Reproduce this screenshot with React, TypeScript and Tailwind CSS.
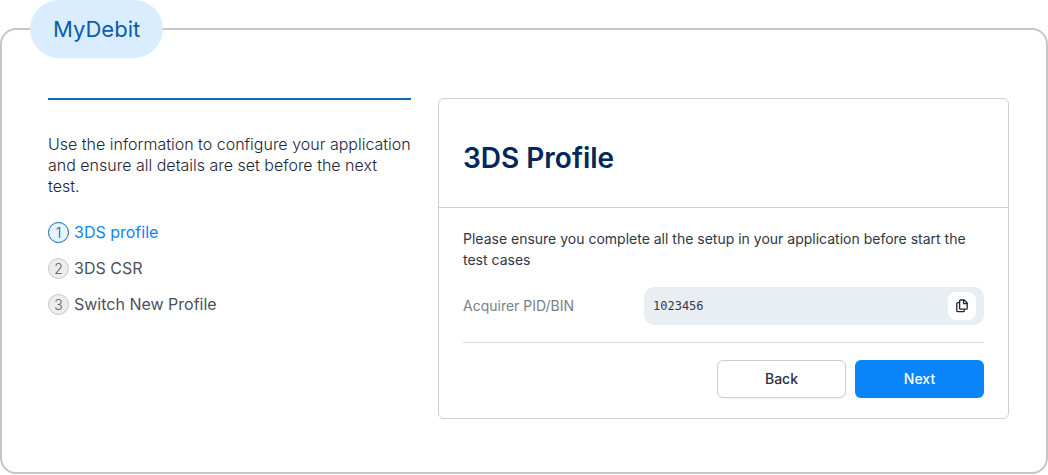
import React, { useState } from 'react';

interface Step {
    id: number;
    label: string;
}

const STEPS: Step[] = [
    { id: 1, label: '3DS profile' },
    { id: 2, label: '3DS CSR' },
    { id: 3, label: 'Switch New Profile' },
];

const CopyIcon: React.FC<{ className?: string }> = ({ className }) => (
    <svg viewBox="0 0 12 14" fill="none" stroke="currentColor" strokeWidth="1.3" strokeLinejoin="round" className={className} aria-hidden="true">
        <path d="M4.6 1h3.6l3 3v5.2a1 1 0 0 1-1 1H4.6a1 1 0 0 1-1-1V2a1 1 0 0 1 1-1Z" />
        <path d="M7.6 1v3.6h3.6" />
        <path d="M3.4 3.6H1.7a.9.9 0 0 0-.9.9v7.2a1 1 0 0 0 1 1h5.6a.9.9 0 0 0 .9-.9v-1.4" />
    </svg>
);

const StepList: React.FC<{ current: number; onSelect: (id: number) => void }> = ({ current, onSelect }) => (
    <ol className="mt-[25px] space-y-[15px]">
        {STEPS.map(step => {
            const active = step.id === current;
            return (
                <li key={step.id}>
                    <button
                        type="button"
                        onClick={() => onSelect(step.id)}
                        aria-current={active ? 'step' : undefined}
                        className="flex items-center gap-[5px] text-left"
                    >
                        <span
                            className={`flex h-[21px] w-[21px] items-center justify-center rounded-full border text-sm leading-none font-light ${active ? 'border-[#1463a8] bg-[#e9f3fd] text-[#0b5cab]' : 'border-[#c4c6c6] bg-[#eceeee] text-[#555a63]'}`}
                        >
                            {step.id}
                        </span>
                        <span className={`text-base leading-[21px] ${active ? 'text-[#0a84f8]' : 'text-[#4c515b]'}`}>
                            {step.label}
                        </span>
                    </button>
                </li>
            );
        })}
    </ol>
);

const ProfileCard: React.FC<{ onBack: () => void; onNext: () => void }> = ({ onBack, onNext }) => {
    const pid = '1023456';

    return (
        <section className="rounded-md border border-[#cfcfcf]">
            <header className="border-b border-[#cfcfcf] px-6 pt-[41px] pb-[31px]">
                <h1 className="text-[28px] leading-9 font-semibold text-[#00285a]">3DS Profile</h1>
            </header>

            <div className="px-6 pt-5 pb-5">
                <p className="pr-4 text-sm leading-[21px] text-[#2f3745]">
                    Please ensure you complete all the setup in your application before start the test cases
                </p>

                <div className="mt-[17px] flex items-center border-b border-[#d9dbdb] pb-[17px]">
                    <label htmlFor="pid" className="w-[181px] shrink-0 text-sm text-[#7b8189]">
                        Acquirer PID/BIN
                    </label>
                    <div className="flex h-[38px] min-w-0 flex-1 items-center rounded-[10px] bg-[#e9eef3] pr-2 pl-[9px]">
                        <input
                            id="pid"
                            type="text"
                            readOnly
                            value={pid}
                            className="min-w-0 flex-1 bg-transparent font-['DejaVu_Sans_Mono',monospace] text-xs text-[#343b47] outline-none"
                        />
                        <button
                            type="button"
                            aria-label="Copy"
                            onClick={() => navigator.clipboard?.writeText(pid)}
                            className="flex h-7 w-7 items-center justify-center rounded-lg bg-white text-[#1d2430]"
                        >
                            <CopyIcon className="h-[14px] w-3" />
                        </button>
                    </div>
                </div>

                <div className="mt-[17px] flex justify-end gap-[9px]">
                    <button type="button" onClick={onBack} className="h-[38px] w-[129px] rounded-md border border-[#cbcdcd] bg-white text-sm font-medium text-[#27303f] shadow-xs">
                        Back
                    </button>
                    <button type="button" onClick={onNext} className="h-[38px] w-[129px] rounded-md bg-[#0a85f9] text-sm font-medium text-white shadow-xs">
                        Next
                    </button>
                </div>
            </div>
        </section>
    );
};

const App: React.FC = () => {
    const [current, setCurrent] = useState(1);

    return (
        <div className="bg-white pt-7 font-['Inter',sans-serif]">
            <main className="relative rounded-2xl border-2 border-[#c6c6c6] pt-[68px] pr-[37px] pb-[53px] pl-[46px]">
                <div className="absolute -top-[30px] left-7 flex h-[58px] items-center rounded-full bg-[#daedff] px-[23px] text-[22px] text-[#0b5cab]">
                    MyDebit
                </div>

                <div className="grid grid-cols-[363fr_571fr] gap-[27px]">
                    <div className="border-t-2 border-[#1768b5] pt-[34px]">
                        <p className="text-base leading-[21px] font-light text-[#1d2636]">
                            Use the information to configure your application and ensure all details are set before the next test.
                        </p>
                        <StepList current={current} onSelect={setCurrent} />
                    </div>

                    <ProfileCard
                        onBack={() => setCurrent(Math.max(1, current - 1))}
                        onNext={() => setCurrent(Math.min(STEPS.length, current + 1))}
                    />
                </div>
            </main>
        </div>
    );
};

export default App;
